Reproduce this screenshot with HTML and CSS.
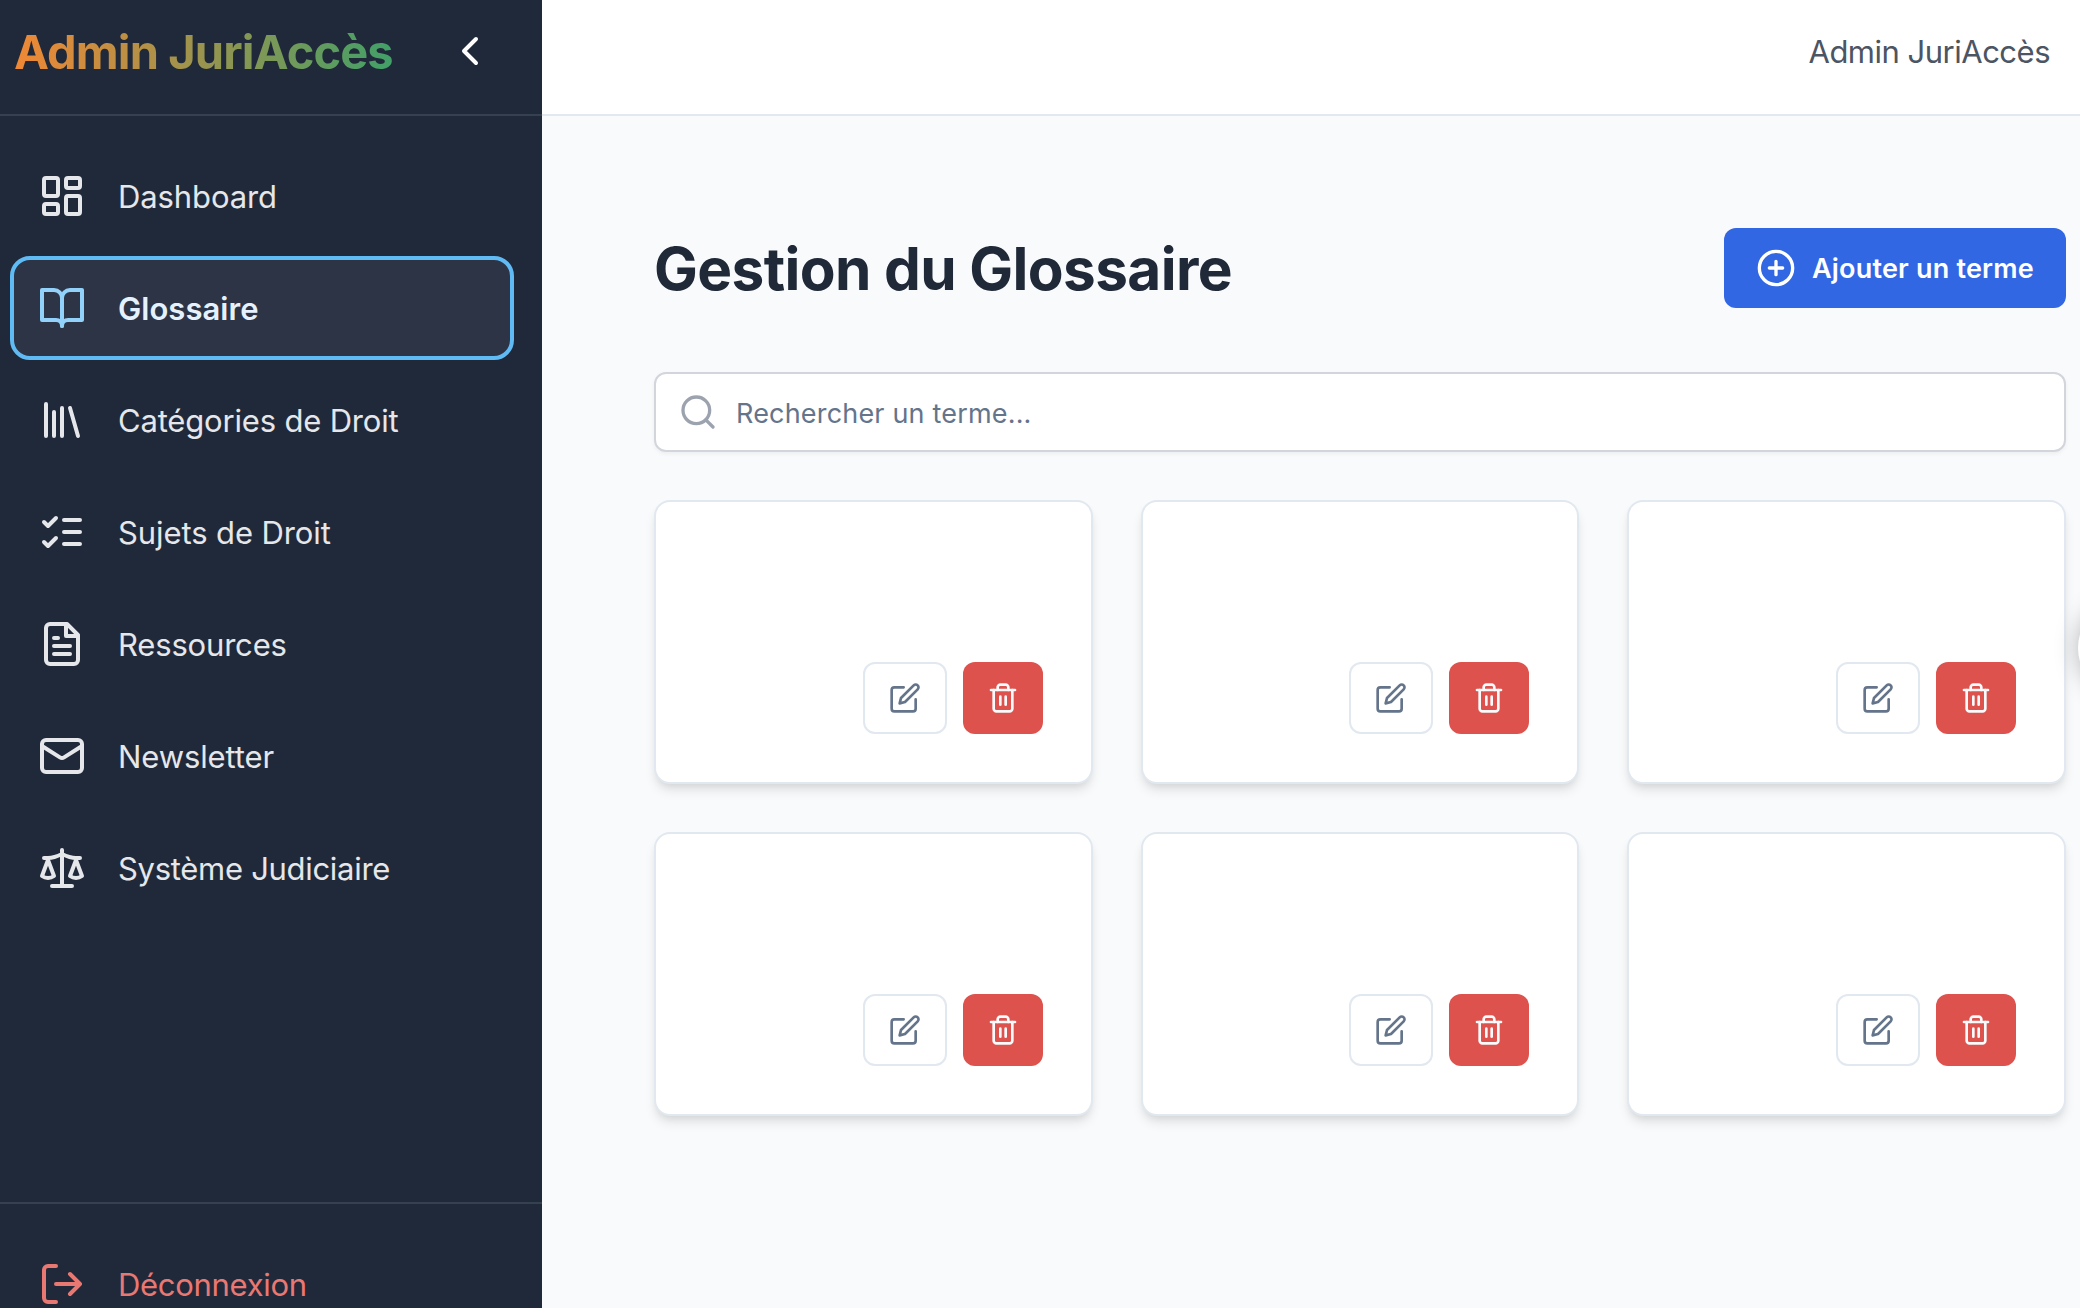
FILE: index.html
```
<!DOCTYPE html>
<html lang="fr">
<head>
<meta charset="utf-8">
<title>Admin JuriAccès</title>
<link rel="stylesheet" href="styles.css">
</head>
<body>
<svg class="sprite" aria-hidden="true">
  <symbol id="edit" viewBox="0 0 24 24"><path d="M11 4H4a2 2 0 0 0-2 2v14a2 2 0 0 0 2 2h14a2 2 0 0 0 2-2v-7"/><path d="M18.5 2.5a2.12 2.12 0 0 1 3 3L12 15l-4 1 1-4Z"/></symbol>
  <symbol id="trash" viewBox="0 0 24 24"><path d="M3 6h18"/><path d="M19 6v14c0 1-1 2-2 2H7c-1 0-2-1-2-2V6"/><path d="M8 6V4c0-1 1-2 2-2h4c1 0 2 1 2 2v2"/><path d="M10 11v6M14 11v6"/></symbol>
</svg>
<div class="app">
  <aside class="sidebar">
    <div class="brand">
      <span class="brand-name">Admin JuriAccès</span>
      <svg class="icon collapse" viewBox="0 0 24 24"><path d="m15 18-6-6 6-6"/></svg>
    </div>
    <nav class="nav">
      <a class="item"><svg class="icon" viewBox="0 0 24 24"><rect x="3" y="3" width="7" height="9" rx="1"/><rect x="14" y="3" width="7" height="5" rx="1"/><rect x="14" y="12" width="7" height="9" rx="1"/><rect x="3" y="16" width="7" height="5" rx="1"/></svg><span>Dashboard</span></a>
      <a class="item active"><svg class="icon" viewBox="0 0 24 24"><path d="M2 3h6a4 4 0 0 1 4 4v14a3 3 0 0 0-3-3H2z"/><path d="M22 3h-6a4 4 0 0 0-4 4v14a3 3 0 0 1 3-3h7z"/></svg><span>Glossaire</span></a>
      <a class="item snug"><svg class="icon" viewBox="0 0 24 24"><path d="m16 6 4 14M12 6v14M8 8v12M4 4v16"/></svg><span>Catégories de Droit</span></a>
      <a class="item"><svg class="icon" viewBox="0 0 24 24"><path d="m3 17 2 2 4-4M3 7l2 2 4-4M13 6h8M13 12h8M13 18h8"/></svg><span>Sujets de Droit</span></a>
      <a class="item snug"><svg class="icon" viewBox="0 0 24 24"><path d="M14.5 2H6a2 2 0 0 0-2 2v16a2 2 0 0 0 2 2h12a2 2 0 0 0 2-2V7.5L14.5 2z"/><path d="M14 2v6h6M16 13H8M16 17H8M10 9H8"/></svg><span>Ressources</span></a>
      <a class="item"><svg class="icon" viewBox="0 0 24 24"><rect x="2" y="4" width="20" height="16" rx="2"/><path d="m22 7-8.97 5.7a1.94 1.94 0 0 1-2.06 0L2 7"/></svg><span>Newsletter</span></a>
      <a class="item tight"><svg class="icon" viewBox="0 0 24 24"><path d="m16 16 3-8 3 8c-.87.65-1.92 1-3 1s-2.13-.35-3-1Z"/><path d="m2 16 3-8 3 8c-.87.65-1.92 1-3 1s-2.13-.35-3-1Z"/><path d="M7 21h10M12 3v18M3 7h2c2 0 5-1 7-2 2 1 5 2 7 2h2"/></svg><span>Système Judiciaire</span></a>
    </nav>
    <div class="foot">
      <a class="item tight logout"><svg class="icon" viewBox="0 0 24 24"><path d="M9 21H5a2 2 0 0 1-2-2V5a2 2 0 0 1 2-2h4M16 17l5-5-5-5M21 12H9"/></svg><span>Déconnexion</span></a>
    </div>
  </aside>
  <div class="page">
    <header class="topbar"><span class="user">Admin JuriAccès</span></header>
    <main class="content">
      <div class="heading">
        <h1>Gestion du Glossaire</h1>
        <button class="add"><svg class="icon" viewBox="0 0 24 24"><circle cx="12" cy="12" r="10"/><path d="M8 12h8M12 8v8"/></svg><span>Ajouter un terme</span></button>
      </div>
      <div class="search"><svg class="icon" viewBox="0 0 24 24"><circle cx="11" cy="11" r="8"/><path d="m21 21-4.3-4.3"/></svg><span>Rechercher un terme...</span></div>
      <div class="grid">
        <article class="card"><button class="btn edit"><svg class="icon"><use href="#edit"/></svg></button><button class="btn delete"><svg class="icon"><use href="#trash"/></svg></button></article>
        <article class="card"><button class="btn edit"><svg class="icon"><use href="#edit"/></svg></button><button class="btn delete"><svg class="icon"><use href="#trash"/></svg></button></article>
        <article class="card"><button class="btn edit"><svg class="icon"><use href="#edit"/></svg></button><button class="btn delete"><svg class="icon"><use href="#trash"/></svg></button></article>
        <article class="card"><button class="btn edit"><svg class="icon"><use href="#edit"/></svg></button><button class="btn delete"><svg class="icon"><use href="#trash"/></svg></button></article>
        <article class="card"><button class="btn edit"><svg class="icon"><use href="#edit"/></svg></button><button class="btn delete"><svg class="icon"><use href="#trash"/></svg></button></article>
        <article class="card"><button class="btn edit"><svg class="icon"><use href="#edit"/></svg></button><button class="btn delete"><svg class="icon"><use href="#trash"/></svg></button></article>
      </div>
    </main>
  </div>
  <div class="float"></div>
</div>
</body>
</html>
```
FILE: styles.css
```
* { box-sizing: border-box; }

body {
  margin: 0;
  font-family: Inter, "Liberation Sans", sans-serif;
  background: #f9fafc;
}

.sprite { display: none; }

.icon {
  flex: none;
  width: 48px;
  height: 48px;
  fill: none;
  stroke: currentColor;
  stroke-width: 2;
  stroke-linecap: round;
  stroke-linejoin: round;
}

.app {
  position: relative;
  display: flex;
  height: 1308px;
  overflow: hidden;
}

/* Sidebar */
.sidebar {
  flex: none;
  display: flex;
  flex-direction: column;
  width: 542px;
  background: #202939;
  color: #e5e7eb;
}

.brand {
  display: flex;
  justify-content: space-between;
  height: 116px;
  padding: 0 48px 0 14px;
  border-bottom: 2px solid #364150;
}

.brand-name {
  align-self: flex-start;
  font-size: 47px;
  font-weight: 700;
  line-height: 64px;
  margin-top: 20px;
  letter-spacing: -0.9px;
  white-space: nowrap;
  color: transparent;
  background: linear-gradient(to right, #f08835, #41a068);
  background-clip: text;
  -webkit-background-clip: text;
}

.collapse { margin-top: 27px; color: #fff; }

.nav {
  flex: 1;
  display: flex;
  flex-direction: column;
  gap: 8px;
  padding: 28px 28px 0 10px;
}

.foot {
  flex: none;
  height: 106px;
  padding: 28px 28px 0 10px;
  border-top: 2px solid #364150;
}

.item {
  flex: none;
  display: flex;
  align-items: center;
  gap: 32px;
  height: 104px;
  padding-left: 24px;
  border: 4px solid transparent;
  border-radius: 20px;
  font-size: 31px;
  line-height: 48px;
  letter-spacing: -0.1px;
  white-space: nowrap;
}

.item span { padding-top: 2px; }

.snug { letter-spacing: -0.18px; }
.tight { letter-spacing: -0.3px; }

.active {
  border-color: #60baf3;
  background: #2d3446;
  color: #92d1fa;
}

.active span { color: #e5f2fe; font-weight: 600; letter-spacing: 0.05px; }

.logout { color: #ea7872; }

/* Page */
.page { flex: 1; min-width: 0; }

.topbar {
  display: flex;
  justify-content: flex-end;
  height: 116px;
  padding: 28px 30px 0 0;
  background: #fff;
  border-bottom: 2px solid #e2e8f0;
}

.user {
  font-size: 31px;
  line-height: 48px;
  letter-spacing: -0.5px;
  color: #4b5563;
}

.content { padding: 112px 14px 0 112px; }

.heading {
  display: flex;
  justify-content: space-between;
  align-items: center;
  height: 80px;
}

h1 {
  margin: 0;
  padding-top: 2px;
  font-size: 58.5px;
  font-weight: 700;
  line-height: 72px;
  letter-spacing: -0.62px;
  color: #202938;
}

button { font-family: inherit; }

.add {
  display: flex;
  align-items: center;
  gap: 16px;
  width: 342px;
  height: 80px;
  padding: 0 0 0 32px;
  border: 0;
  border-radius: 12px;
  background: #3167e3;
  color: #fff;
  font-size: 27px;
  font-weight: 600;
  letter-spacing: 0.2px;
  white-space: nowrap;
}

.add .icon, .search .icon { width: 40px; height: 40px; }

.search {
  display: flex;
  align-items: center;
  gap: 18px;
  height: 80px;
  margin-top: 64px;
  padding-left: 22px;
  border: 2px solid #d2d5dc;
  border-radius: 12px;
  background: #fff;
  box-shadow: 0 2px 4px rgba(0, 0, 0, 0.05);
  color: #9ca3af;
  font-size: 27px;
}

.search span { padding-top: 2px; color: #64748b; letter-spacing: 0.18px; }

.grid {
  display: grid;
  grid-template-columns: repeat(3, 1fr);
  gap: 48px;
  margin-top: 48px;
}

.card {
  display: flex;
  justify-content: flex-end;
  align-items: flex-end;
  gap: 16px;
  height: 284px;
  padding: 48px;
  border: 2px solid #e2e8f0;
  border-radius: 16px;
  background: #fff;
  box-shadow: 0 8px 12px -2px rgba(0, 0, 0, 0.1), 0 4px 8px -4px rgba(0, 0, 0, 0.1);
}

.btn {
  display: flex;
  align-items: center;
  justify-content: center;
  height: 72px;
  padding: 0;
  border-radius: 12px;
}

.btn .icon { width: 32px; height: 32px; }

.edit { width: 84px; border: 2px solid #e2e8f0; background: #fff; color: #64748b; }
.delete { width: 80px; border: 0; background: #dd524c; color: #f8fafc; }

/* Floating handle, mostly beyond the right edge */
.float {
  position: absolute;
  left: 2078px;
  top: 600px;
  width: 96px;
  height: 96px;
  border-radius: 50%;
  background: #fff;
  box-shadow: 0 0 24px rgba(0, 0, 0, 0.28);
}
```
